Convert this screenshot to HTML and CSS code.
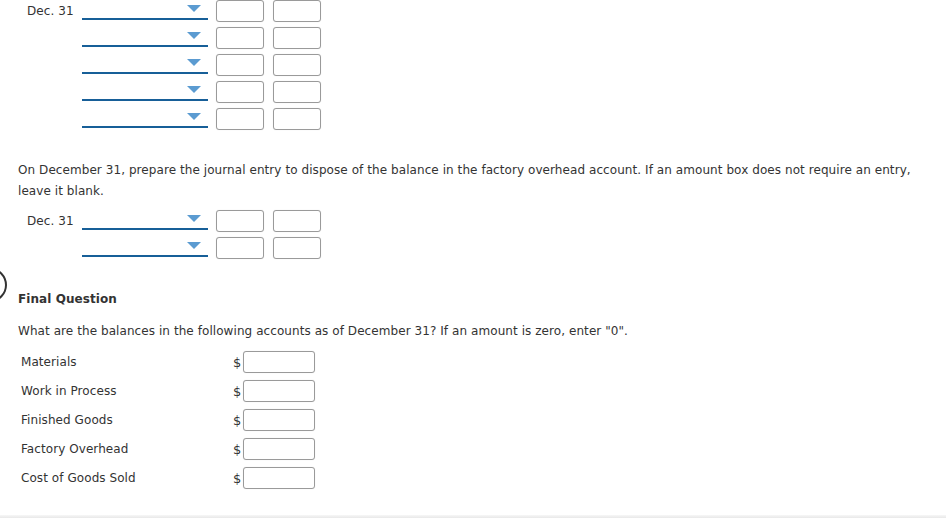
FILE: index.html
```html
<!DOCTYPE html>
<html lang="en">
<head>
  <meta charset="UTF-8" />
  <title>Journal Entries</title>
  <link rel="stylesheet" href="styles.css">
</head>
<body>

<div class="step-marker"></div>

<div class="page">
  <div class="journal first">
    <div class="jrow">
      <span class="jdate">Dec. 31</span>
      <div class="acct"><span class="caret"></span></div>
      <input type="text" class="amt" />
      <input type="text" class="amt" />
    </div>
    <div class="jrow">
      <span class="jdate"></span>
      <div class="acct"><span class="caret"></span></div>
      <input type="text" class="amt" />
      <input type="text" class="amt" />
    </div>
    <div class="jrow">
      <span class="jdate"></span>
      <div class="acct"><span class="caret"></span></div>
      <input type="text" class="amt" />
      <input type="text" class="amt" />
    </div>
    <div class="jrow">
      <span class="jdate"></span>
      <div class="acct"><span class="caret"></span></div>
      <input type="text" class="amt" />
      <input type="text" class="amt" />
    </div>
    <div class="jrow">
      <span class="jdate"></span>
      <div class="acct"><span class="caret"></span></div>
      <input type="text" class="amt" />
      <input type="text" class="amt" />
    </div>
  </div>

  <p class="prompt">On December 31, prepare the journal entry to dispose of the balance in the factory overhead account. If an amount box does not require an entry, leave it blank.</p>

  <div class="journal second">
    <div class="jrow">
      <span class="jdate">Dec. 31</span>
      <div class="acct"><span class="caret"></span></div>
      <input type="text" class="amt" />
      <input type="text" class="amt" />
    </div>
    <div class="jrow">
      <span class="jdate"></span>
      <div class="acct"><span class="caret"></span></div>
      <input type="text" class="amt" />
      <input type="text" class="amt" />
    </div>
  </div>

  <h4 class="final-title">Final Question</h4>
  <p class="final-prompt">What are the balances in the following accounts as of December 31? If an amount is zero, enter "0".</p>

  <div class="balances">
    <div class="brow"><span class="blabel">Materials</span><span class="dollar">$</span><input type="text" class="bal" /></div>
    <div class="brow"><span class="blabel">Work in Process</span><span class="dollar">$</span><input type="text" class="bal" /></div>
    <div class="brow"><span class="blabel">Finished Goods</span><span class="dollar">$</span><input type="text" class="bal" /></div>
    <div class="brow"><span class="blabel">Factory Overhead</span><span class="dollar">$</span><input type="text" class="bal" /></div>
    <div class="brow"><span class="blabel">Cost of Goods Sold</span><span class="dollar">$</span><input type="text" class="bal" /></div>
  </div>
</div>

<div class="bottom-edge"></div>

</body>
</html>
```

FILE: styles.css
```css
* {
  box-sizing: border-box;
}

html, body {
  height: 100%;
}

body {
  margin: 0;
  font-family: 'DejaVu Sans', Verdana, sans-serif;
  font-size: 12px;
  letter-spacing: 0.07px;
  color: #333;
  background: #fff;
  position: relative;
  overflow: hidden;
}

.page {
  padding: 0 20px 0 18px;
}

/* journal entry rows */
.journal {
  display: flex;
  flex-direction: column;
  gap: 5px;
}

.jrow {
  display: flex;
  align-items: flex-start;
  height: 22px;
}

.jdate {
  width: 64px;
  padding-left: 9px;
  padding-top: 1px;
  line-height: 20px;
  flex-shrink: 0;
}

.acct {
  position: relative;
  width: 126px;
  height: 20px;
  border-bottom: 2px solid #175f98;
  margin-right: 8px;
}

.caret {
  position: absolute;
  right: 7px;
  top: 5px;
  width: 0;
  height: 0;
  border-left: 7px solid transparent;
  border-right: 7px solid transparent;
  border-top: 7px solid #5b9bd1;
}

.amt, .bal {
  height: 22px;
  border: 1px solid #9a9a9a;
  border-radius: 3px;
  box-shadow: 0 0 1px rgba(0,0,0,0.15);
  padding: 2px 4px;
  font: inherit;
  margin: 0;
  background: #fff;
}

.amt {
  width: 48px;
  margin-right: 9px;
}

.prompt {
  margin: 30px 0 0;
  line-height: 21px;
}

.journal.second {
  margin-top: 8px;
}

.final-title {
  margin: 30px 0 0;
  font-size: 12px;
  font-weight: bold;
  line-height: 20px;
}

.final-prompt {
  margin: 12px 0 0;
  line-height: 20px;
}

/* balances */
.balances {
  margin-top: 10px;
  display: flex;
  flex-direction: column;
  gap: 7px;
}

.brow {
  display: flex;
  align-items: center;
  height: 22px;
}

.blabel {
  width: 215px;
  padding-left: 3px;
}

.dollar {
  width: 10px;
  font-size: 13px;
}

.bal {
  width: 72px;
}

.step-marker {
  position: absolute;
  left: -26px;
  top: 268px;
  width: 33px;
  height: 34px;
  border: 2px solid #333;
  border-radius: 50%;
}

.bottom-edge {
  position: absolute;
  left: 0;
  right: 0;
  bottom: 0;
  height: 3px;
  background: linear-gradient(#f7f7f7, #e8e8e8);
}
```
